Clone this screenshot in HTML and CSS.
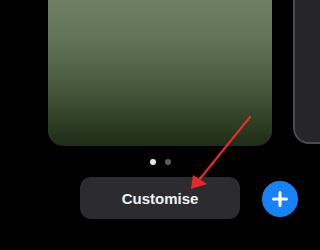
FILE: index.html
```html
<!DOCTYPE html>
<html>
<head>
<meta charset="utf-8">
<link rel="stylesheet" href="styles.css">
</head>
<body>
<div class="screen">
  <div class="cards">
    <div class="card card-green"></div>
    <div class="card card-next"></div>
  </div>
  <div class="dots">
    <span class="dot dot-active"></span>
    <span class="dot"></span>
  </div>
  <div class="actions">
    <div class="customise">Customise</div>
    <div class="add">
      <svg width="16" height="16" viewBox="0 0 16 16"><path d="M8 1.5V14.5M1.5 8H14.5" stroke="#fff" stroke-width="3" stroke-linecap="round"/></svg>
    </div>
  </div>
  <svg class="arrow" width="320" height="250" viewBox="0 0 320 250">
    <line x1="250" y1="117" x2="199" y2="180" stroke="#e8292b" stroke-width="2.2" stroke-linecap="round"/>
    <polygon points="191,189 193,175 207,184" fill="#e8292b"/>
  </svg>
</div>
</body>
</html>
```
FILE: styles.css
```css
html, body {
  margin: 0;
  padding: 0;
  background: #000;
}
.screen {
  position: relative;
  width: 320px;
  height: 250px;
  overflow: hidden;
  background: #000;
  font-family: "Liberation Sans", Arial, sans-serif;
}
.cards {
  display: flex;
  gap: 21px;
  padding-left: 48px;
}
.card {
  flex: none;
  height: 146px;
}
.card-green {
  width: 224px;
  border-radius: 0 0 15px 15px;
  background: linear-gradient(to bottom, #6f8064 0%, #5f7254 30%, #48593e 60%, #2d3d24 85%, #1f2c17 100%);
}
.card-next {
  width: 40px;
  height: 144px;
  box-sizing: border-box;
  border: 2px solid #4c4c4e;
  border-top: none;
  border-radius: 0 0 0 16px;
  background: #262628;
}
.dots {
  display: flex;
  justify-content: center;
  gap: 9px;
  margin-top: 13px;
}
.dot {
  width: 6px;
  height: 6px;
  border-radius: 50%;
  background: #5c5c5e;
}
.dot-active {
  background: #e8e8e8;
}
.actions {
  display: flex;
  align-items: center;
  gap: 22px;
  padding-left: 80px;
  margin-top: 12px;
}
.customise {
  width: 160px;
  height: 42px;
  border-radius: 11px;
  background: #2c2c2e;
  color: #f2f2f2;
  font-size: 15px;
  font-weight: bold;
  display: flex;
  align-items: center;
  justify-content: center;
}
.add {
  width: 36px;
  height: 36px;
  border-radius: 50%;
  background: #1782f5;
  display: flex;
  align-items: center;
  justify-content: center;
  margin-top: 2px;
}
.add svg {
  display: block;
}
.arrow {
  position: absolute;
  left: 0;
  top: 0;
}
```
